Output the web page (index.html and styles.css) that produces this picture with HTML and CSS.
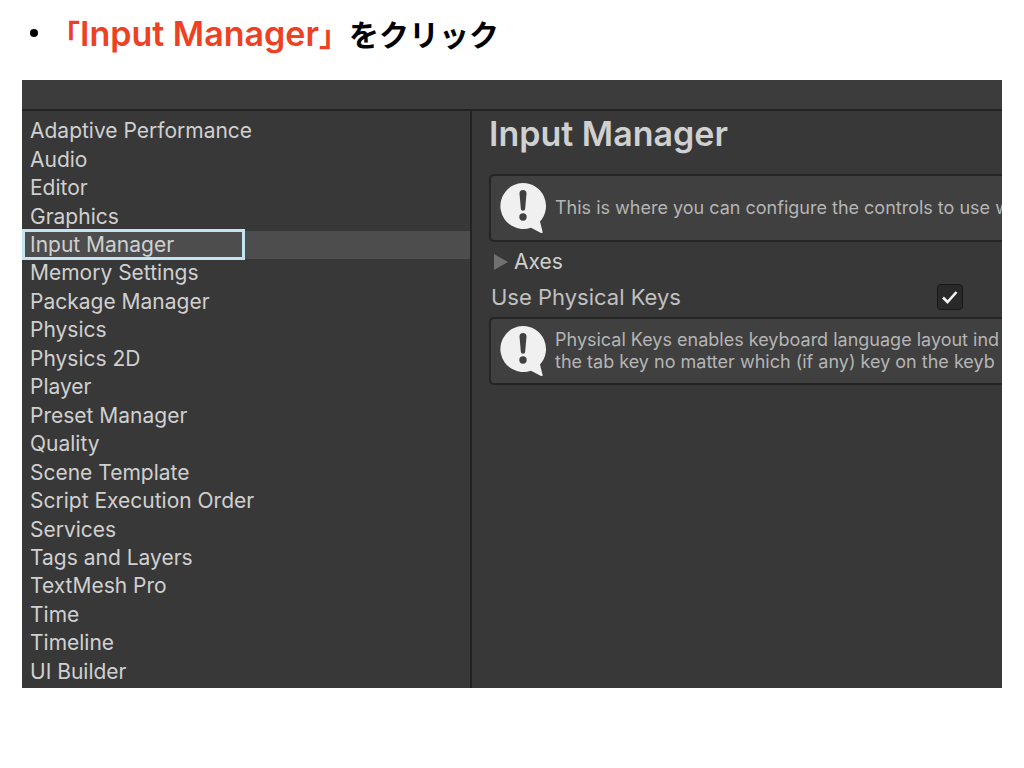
FILE: index.html
```html
<!DOCTYPE html>
<html lang="ja">
<head>
<meta charset="utf-8">
<title>Input Manager</title>
<link rel="stylesheet" href="styles.css">
</head>
<body>
<ul class="steps">
  <li class="step"><span class="mark">「<span class="latin">Input Manager</span>」</span>をクリック</li>
</ul>
<main class="settings">
  <div class="toolbar"></div>
  <nav class="categories">
    <a class="category" href="#">Adaptive Performance</a>
    <a class="category" href="#">Audio</a>
    <a class="category" href="#">Editor</a>
    <a class="category" href="#">Graphics</a>
    <a class="category selected" href="#" aria-current="page">Input Manager</a>
    <a class="category" href="#">Memory Settings</a>
    <a class="category" href="#">Package Manager</a>
    <a class="category" href="#">Physics</a>
    <a class="category" href="#">Physics 2D</a>
    <a class="category" href="#">Player</a>
    <a class="category" href="#">Preset Manager</a>
    <a class="category" href="#">Quality</a>
    <a class="category" href="#">Scene Template</a>
    <a class="category" href="#">Script Execution Order</a>
    <a class="category" href="#">Services</a>
    <a class="category" href="#">Tags and Layers</a>
    <a class="category" href="#">TextMesh Pro</a>
    <a class="category" href="#">Time</a>
    <a class="category" href="#">Timeline</a>
    <a class="category" href="#">UI Builder</a>
  </nav>
  <section class="details">
    <h1 class="title">Input Manager</h1>
    <div class="help">
      <svg class="help-icon" viewBox="0 0 48 52" aria-hidden="true">
        <path fill="#f0f0f0" d="M24 1a23 23 0 1 0 8 44.700L42 51q2 .5 1.500-1.500L41 39.500A23 23 0 0 0 24 1z"/>
        <path fill="#404040" d="M20.500 11.500a3.500 3.500 0 0 1 7 0L26.200 26.500a2.200 2.200 0 0 1-4.400 0z"/>
        <circle cx="24" cy="35" r="3.700" fill="#404040"/>
      </svg>
      <p class="help-text">This is where you can configure the controls to use w</p>
    </div>
    <button class="foldout" type="button">
      <svg class="arrow" viewBox="0 0 14 16" aria-hidden="true"><path fill="#707070" d="M0 0l14 8L0 16z"/></svg>
      Axes
    </button>
    <div class="field">
      <label for="physical-keys">Use Physical Keys</label>
      <span class="toggle">
        <input class="check" id="physical-keys" type="checkbox" checked>
        <svg class="tick" viewBox="0 0 26 26" aria-hidden="true"><path d="M6 13.500l4.500 4.500L19.500 8" fill="none" stroke="#f0f0f0" stroke-width="2.600"/></svg>
      </span>
    </div>
    <div class="help">
      <svg class="help-icon" viewBox="0 0 48 52" aria-hidden="true">
        <path fill="#f0f0f0" d="M24 1a23 23 0 1 0 8 44.700L42 51q2 .5 1.500-1.500L41 39.500A23 23 0 0 0 24 1z"/>
        <path fill="#404040" d="M20.500 11.500a3.500 3.500 0 0 1 7 0L26.200 26.500a2.200 2.200 0 0 1-4.400 0z"/>
        <circle cx="24" cy="35" r="3.700" fill="#404040"/>
      </svg>
      <p class="help-text">Physical Keys enables keyboard language layout ind<br>the tab key no matter which (if any) key on the keyb</p>
    </div>
  </section>
</main>
</body>
</html>
```
FILE: styles.css
```css
*,
*::before,
*::after {
  box-sizing: border-box;
}

body {
  display: flex;
  flex-direction: column;
  min-height: 100vh;
  margin: 0;
  padding: 11px 22px 80px;
  background: #fff;
  font-family: Inter, "Noto Sans", sans-serif;
}

.steps {
  margin: 0 0 25px;
  padding: 0 0 0 8px;
  list-style: none;
}

.step {
  display: flex;
  align-items: center;
  height: 44px;
  color: #000;
  font: 700 30px/44px "Noto Sans CJK JP", sans-serif;
}

.step::before {
  width: 8px;
  height: 8px;
  margin-right: 12px;
  border-radius: 50%;
  background: #000;
  content: "";
}

.mark {
  color: #ee4023;
}

.latin {
  font-family: Inter, sans-serif;
  font-size: 34px;
  font-weight: 600;
}

.settings {
  display: grid;
  flex: 1;
  grid-template-rows: 31px 1fr;
  grid-template-columns: 450px 1fr;
  overflow: hidden;
  background: #383838;
  color: #d0d0d0;
}

.toolbar {
  grid-column: 1 / -1;
  border-bottom: 2px solid #232323;
  background: #3c3c3c;
}

.categories {
  display: flex;
  flex-direction: column;
  padding: 6px 0 2px;
  border-right: 2px solid #232323;
}

.category {
  display: flex;
  flex: 1;
  align-items: center;
  padding-left: 8px;
  color: inherit;
  font-size: 21px;
  line-height: 28px;
  text-decoration: none;
}

.selected {
  position: relative;
  background: #4d4d4d;
}

.selected::after {
  position: absolute;
  inset: -2px auto -1px 0;
  width: 223px;
  border: 3px solid #c5e4f3;
  content: "";
}

.details {
  display: flex;
  flex-direction: column;
  min-width: 0;
  padding-left: 17px;
}

.title {
  margin: 0 0 17px;
  font-size: 34px;
  font-weight: 600;
  line-height: 46px;
}

.help {
  display: flex;
  align-items: center;
  gap: 8px;
  height: 68px;
  padding-left: 8px;
  border: 2px solid #252525;
  border-right: 0;
  border-radius: 5px 0 0 5px;
  background: #404040;
}

.help-icon {
  flex: none;
  width: 48px;
  height: 52px;
}

.help-text {
  margin: 0;
  color: #b5b5b5;
  font-size: 18px;
  line-height: 22px;
  white-space: nowrap;
}

.foldout {
  display: flex;
  align-items: center;
  gap: 6px;
  height: 40px;
  padding: 0 0 0 5px;
  border: 0;
  background: none;
  color: inherit;
  font: 21px/28px Inter, "Noto Sans", sans-serif;
}

.arrow {
  width: 14px;
  height: 16px;
}

.field {
  display: flex;
  align-items: center;
  justify-content: space-between;
  height: 35px;
  padding: 0 39px 5px 2px;
  color: #c0c0c0;
  font-size: 22px;
  line-height: 28px;
}

.toggle {
  display: grid;
}

.check,
.tick {
  grid-area: 1 / 1;
  width: 26px;
  height: 26px;
  margin: 0;
}

.check {
  border: 1px solid #181818;
  border-radius: 4px;
  appearance: none;
  background: #292929;
}

.tick {
  pointer-events: none;
}
```
